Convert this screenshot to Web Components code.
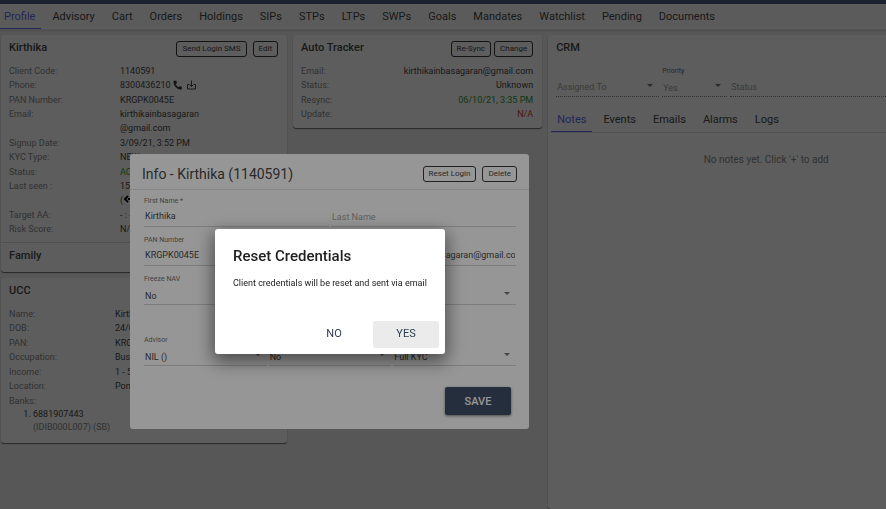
<!DOCTYPE html>
<html lang="en">
<head>
<meta charset="utf-8">
<title>Client Profile</title>
<style>
	html, body {
		margin: 0;
		height: 100%;
		overflow: hidden;
	}

	body {
		font-family: Roboto, "Liberation Sans", sans-serif;
		font-size: 9px;
		line-height: 14px;
		color: #484848;
		background: #f1f1f1;
	}
</style>
</head>
<body>
<client-page></client-page>

<script>
class BaseElement extends HTMLElement {
	constructor() {
		super();
		this.attachShadow({ mode: "open" });
	}

	connectedCallback() {
		const template = document.createElement("template");
		template.innerHTML = this.render();
		this.shadowRoot.replaceChildren(template.content.cloneNode(true));
	}

	attr(name) {
		return this.getAttribute(name) || "";
	}
}

class TabBar extends BaseElement {
	render() {
		const tabs = this.attr("tabs")
			.split(",")
			.map((name, i) => `<a href="#${name.toLowerCase()}" ${i === 0 ? 'class="active" aria-current="page"' : ""}>${name}</a>`)
			.join("");

		return `
			<style>
				:host {
					display: block;
					border-bottom: 1px solid #e4e4e4;
				}

				nav {
					display: flex;
					gap: 5px;
				}

				a {
					box-sizing: border-box;
					height: 25px;
					padding: 0 6px;
					border-bottom: 1px solid transparent;
					font-size: 11px;
					line-height: 25px;
					color: #484848;
					text-decoration: none;
					white-space: nowrap;
				}

				a.active {
					color: #5f6cf0;
					border-color: #5f6cf0;
				}
			</style>
			<nav>${tabs}</nav>`;
	}
}

class OutlineButton extends BaseElement {
	render() {
		return `
			<style>
				:host {
					display: block;
				}

				button {
					display: block;
					height: 16px;
					padding: 0 5px;
					border: 1px solid #383838;
					border-radius: 3px;
					background: none;
					font: 8px/14px Roboto, sans-serif;
					color: #484848;
					white-space: nowrap;
				}
			</style>
			<button type="button"><slot></slot></button>`;
	}
}

class PanelCard extends BaseElement {
	render() {
		return `
			<style>
				:host {
					display: block;
					box-sizing: border-box;
					border-radius: 3px;
					background: #fff;
					box-shadow: 0 1px 1px rgba(0, 0, 0, .55);
				}

				header {
					display: flex;
					justify-content: space-between;
					height: 23px;
					padding: 6px 9px 0 8px;
				}

				h2 {
					margin: 0;
					font-size: 11px;
					line-height: 14px;
					font-weight: 500;
				}

				.actions {
					display: flex;
					gap: var(--action-gap, 6px);
				}
			</style>
			<header>
				<h2>${this.attr("heading")}</h2>
				<div class="actions"><slot name="actions"></slot></div>
			</header>
			<slot></slot>`;
	}
}

class DetailRow extends BaseElement {
	render() {
		return `
			<style>
				:host {
					display: flex;
					padding: 0 9px 0 8px;
				}

				:host(:nth-of-type(even)) {
					padding-bottom: 1px;
				}

				:host([spread]) {
					justify-content: space-between;
				}

				span {
					flex: 0 0 var(--label-width, 111px);
					color: #8a8a8a;
				}

				:host([spread]) span {
					flex: none;
				}

				div {
					white-space: nowrap;
				}
			</style>
			<span>${this.attr("label")}</span>
			<div><slot></slot></div>`;
	}
}

class FormField extends BaseElement {
	render() {
		const label = this.attr("label");
		const value = this.attr("value");
		const off = this.hasAttribute("disabled") ? "disabled" : "";
		const name = label ? "" : `aria-label="${this.attr("name")}"`;
		const control = this.hasAttribute("select")
			? `<select id="control" ${name} ${off}><option>${value}</option></select>
				<svg width="6" height="3" viewBox="0 0 6 3" aria-hidden="true"><path d="M0 0h6L3 3z"/></svg>`
			: `<input id="control" type="text" value="${value}" ${name} ${off}>`;

		return `
			<style>
				:host {
					display: block;
					position: relative;
					min-width: 0;
					border-bottom: 1px solid #d4d4d4;
				}

				:host([disabled]) {
					border-bottom: 1px dotted #8a8a8a;
				}

				label {
					display: block;
					height: 9px;
					font-size: 7px;
					line-height: 9px;
					color: #707070;
				}

				input, select {
					display: block;
					box-sizing: border-box;
					width: 100%;
					height: 20px;
					padding: 0 1px;
					border: 0;
					background: none;
					appearance: none;
					font: 9px/20px Roboto, sans-serif;
					color: #484848;
					opacity: 1;
				}

				select {
					padding-top: 2px;
				}

				input:disabled, select:disabled {
					color: #a4a4a4;
				}

				svg {
					position: absolute;
					right: 6px;
					bottom: 9px;
					fill: #777;
				}

				:host([empty]) {
					padding-top: 9px;
				}

				:host([empty]) label {
					position: absolute;
					top: 16px;
					left: 1px;
					font-size: 9px;
					color: #a4a4a4;
				}
			</style>
			<label for="control">${label}</label>
			${control}`;
	}
}

class InfoDialog extends BaseElement {
	render() {
		return `
			<style>
				:host {
					position: fixed;
					inset: 0;
					background: rgba(0, 0, 0, .38);
				}

				section {
					position: absolute;
					top: 154px;
					left: 130px;
					box-sizing: border-box;
					width: 399px;
					padding-bottom: 14px;
					border-radius: 3px;
					background: #fff;
				}

				header {
					display: flex;
					align-items: center;
					gap: 6px;
					box-sizing: border-box;
					height: 36px;
					padding: 5px 12px 0;
					margin-bottom: 7px;
					border-bottom: 1px solid #e4e4e4;
				}

				h2 {
					flex: 1;
					margin: 0;
					font-size: 14px;
					line-height: 20px;
					font-weight: 400;
				}

				form {
					padding: 0 13px 0 14px;
				}

				.row {
					display: grid;
					grid-template-columns: repeat(3, 1fr);
					gap: 2px;
					margin-bottom: 9px;
				}

				.row.half {
					grid-template-columns: repeat(2, 1fr);
				}

				.row.last {
					margin-top: 31px;
					margin-bottom: 21px;
				}

				.save {
					display: block;
					width: 66px;
					height: 28px;
					margin-left: auto;
					margin-right: 5px;
					border: 0;
					border-radius: 2px;
					background: #404e66;
					box-shadow: 0 1px 3px rgba(0, 0, 0, .5);
					font: 500 11px/28px Roboto, sans-serif;
					color: #fff;
				}
			</style>
			<section role="dialog" aria-label="Info">
				<header>
					<h2>Info - Kirthika (1140591)</h2>
					<outline-button>Reset Login</outline-button>
					<outline-button>Delete</outline-button>
				</header>
				<form>
					<div class="row half">
						<form-field label="First Name *" value="Kirthika"></form-field>
						<form-field label="Last Name" empty></form-field>
					</div>
					<div class="row">
						<form-field label="PAN Number" value="KRGPK0045E"></form-field>
						<form-field name="Phone"></form-field>
						<form-field name="Email" value="kirthikainbasagaran@gmail.com"></form-field>
					</div>
					<div class="row">
						<form-field select label="Freeze NAV" value="No"></form-field>
						<form-field select name="Type"></form-field>
						<form-field select name="Status"></form-field>
					</div>
					<div class="row last">
						<form-field select label="Advisor" value="NIL ()"></form-field>
						<form-field select name="Family head" value="No"></form-field>
						<form-field select name="KYC" value="Full KYC"></form-field>
					</div>
					<button class="save" type="button">SAVE</button>
				</form>
			</section>`;
	}
}

class ConfirmDialog extends BaseElement {
	render() {
		return `
			<style>
				:host {
					position: fixed;
					inset: 0;
					background: rgba(0, 0, 0, .41);
					color: #212121;
				}

				section {
					position: absolute;
					top: 229px;
					left: 215px;
					box-sizing: border-box;
					width: 230px;
					padding: 17px 6px 6px 18px;
					border-radius: 3px;
					background: #fff;
					box-shadow: 0 6px 18px 2px rgba(0, 0, 0, .5);
				}

				h2 {
					margin: 0 0 10px;
					font-size: 15px;
					line-height: 20px;
					font-weight: 500;
				}

				p {
					margin: 0 0 31px;
					white-space: nowrap;
				}

				footer {
					display: flex;
					justify-content: flex-end;
					gap: 6px;
				}

				button {
					width: 66px;
					height: 27px;
					padding: 0 0 1px;
					border: 0;
					border-radius: 2px;
					background: none;
					font: 11px/26px Roboto, sans-serif;
					color: #2c3e50;
				}

				.primary {
					background: #ebebeb;
				}
			</style>
			<section role="alertdialog" aria-label="${this.attr("heading")}">
				<h2>${this.attr("heading")}</h2>
				<p><slot></slot></p>
				<footer>
					<button type="button">NO</button>
					<button type="button" class="primary">YES</button>
				</footer>
			</section>`;
	}
}

class ClientPage extends BaseElement {
	render() {
		return `
			<style>
				:host {
					display: block;
					height: 100%;
					overflow: hidden;
				}

				.page {
					display: flex;
					flex-direction: column;
					width: 112%;
					height: 100%;
				}

				.top {
					height: 4px;
					background: #4c5b80;
				}

				.main-tabs {
					margin-left: -2px;
					background: #fbfbfb;
					box-shadow: 0 1px 2px rgba(0, 0, 0, .15);
				}

				main {
					flex: 1;
					display: grid;
					grid-template-columns: 286fr 249fr 436fr;
					gap: 6px;
					padding: 5px 8px 0 1px;
				}

				.column {
					display: flex;
					flex-direction: column;
					gap: 6px;
				}

				.value-icons {
					display: inline-flex;
					gap: 4px;
					vertical-align: top;
					padding-top: 2px;
				}

				.green {
					color: #2e9a32;
				}

				.red {
					color: #d83a30;
				}

				.profile h2 {
					margin: 5px 0 0;
					padding: 6px 8px 9px;
					border-top: 1px solid #ddd;
					font-size: 11px;
					line-height: 14px;
					font-weight: 500;
				}

				.tracker {
					--action-gap: 3px;
					padding-bottom: 6px;
				}

				.ucc {
					--label-width: 106px;
					padding-bottom: 9px;
				}

				ol {
					margin: 0;
					padding: 0 0 0 32px;
					line-height: 13px;
				}

				ol span {
					display: block;
					color: #8a8a8a;
				}

				.fields {
					display: grid;
					grid-template-columns: 103fr 65fr 246fr;
					gap: 3px;
					padding: 3px 8px 10px;
				}

				.crm-tabs {
					padding: 0 3px;
				}

				.none {
					margin: 20px 0;
					text-align: center;
					font-size: 10px;
					color: #8a8a8a;
				}
			</style>
			<div class="page">
				<div class="top"></div>
				<tab-bar class="main-tabs" tabs="Profile,Advisory,Cart,Orders,Holdings,SIPs,STPs,LTPs,SWPs,Goals,Mandates,Watchlist,Pending,Documents"></tab-bar>
				<main>
					<div class="column">
						<panel-card class="profile" heading="Kirthika">
							<outline-button slot="actions">Send Login SMS</outline-button>
							<outline-button slot="actions">Edit</outline-button>
							<detail-row label="Client Code:">1140591</detail-row>
							<detail-row label="Phone:">8300436210 <span class="value-icons"><svg width="10" height="10" viewBox="0 0 24 24" fill="#383838"><path d="M6.600 10.800c1.400 2.800 3.800 5.100 6.600 6.600l2.200-2.200c.3-.3.7-.4 1-.2 1.100.4 2.300.6 3.600.6.6 0 1 .4 1 1V22c0 .6-.4 1-1 1C10 23 1 14 1 3c0-.6.5-1 1-1h5.500c.6 0 1 .4 1 1 0 1.200.2 2.500.6 3.600.1.3 0 .7-.2 1z"/></svg><svg width="9" height="10" viewBox="0 0 18 20" fill="none" stroke="#484848" stroke-width="2"><path d="M4 9H1v9h16V9h-3M9 1v12M5 9l4 4 4-4"/></svg></span></detail-row>
							<detail-row label="PAN Number:">KRGPK0045E</detail-row>
							<detail-row label="Email:">kirthikainbasagaran<br>@gmail.com</detail-row>
							<detail-row label="Signup Date:">3/09/21, 3:52 PM</detail-row>
							<detail-row label="KYC Type:">NEW</detail-row>
							<detail-row label="Status:"><span class="green">ACTIVE</span></detail-row>
							<detail-row label="Last seen :">15/10/21<br>(<svg width="9" height="8" viewBox="0 0 9 8" fill="none" stroke="#000" stroke-width="2"><path d="M5 1L2 4l3 3M5 4h4"/></svg>)</detail-row>
							<detail-row label="Target AA:">- : -</detail-row>
							<detail-row label="Risk Score:">N/A</detail-row>
							<h2>Family</h2>
						</panel-card>
						<panel-card class="ucc" heading="UCC">
							<detail-row label="Name:">Kirthika</detail-row>
							<detail-row label="DOB:">24/0</detail-row>
							<detail-row label="PAN:">KRGPK0045E</detail-row>
							<detail-row label="Occupation:">Business</detail-row>
							<detail-row label="Income:">1 - 5</detail-row>
							<detail-row label="Location:">Pon</detail-row>
							<detail-row label="Banks:"></detail-row>
							<ol><li>6881907443<span>(IDIB000L007) (SB)</span></li></ol>
						</panel-card>
					</div>
					<div class="column">
						<panel-card class="tracker" heading="Auto Tracker">
							<outline-button slot="actions">Re-Sync</outline-button>
							<outline-button slot="actions">Change</outline-button>
							<detail-row spread label="Email:">kirthikainbasagaran@gmail.com</detail-row>
							<detail-row spread label="Status:">Unknown</detail-row>
							<detail-row spread label="Resync:"><span class="green">06/10/21, 3:35 PM</span></detail-row>
							<detail-row spread label="Update:"><span class="red">N/A</span></detail-row>
						</panel-card>
					</div>
					<panel-card heading="CRM">
						<div class="fields">
							<form-field select disabled empty label="Assigned To"></form-field>
							<form-field select disabled label="Priority" value="Yes"></form-field>
							<form-field select disabled empty label="Status"></form-field>
						</div>
						<tab-bar class="crm-tabs" tabs="Notes,Events,Emails,Alarms,Logs"></tab-bar>
						<p class="none">No notes yet. Click '+' to add</p>
					</panel-card>
				</main>
			</div>
			<info-dialog></info-dialog>
			<confirm-dialog heading="Reset Credentials">Client credentials will be reset and sent via email</confirm-dialog>`;
	}
}

customElements.define("tab-bar", TabBar);
customElements.define("outline-button", OutlineButton);
customElements.define("panel-card", PanelCard);
customElements.define("detail-row", DetailRow);
customElements.define("form-field", FormField);
customElements.define("info-dialog", InfoDialog);
customElements.define("confirm-dialog", ConfirmDialog);
customElements.define("client-page", ClientPage);
</script>
</body>
</html>
